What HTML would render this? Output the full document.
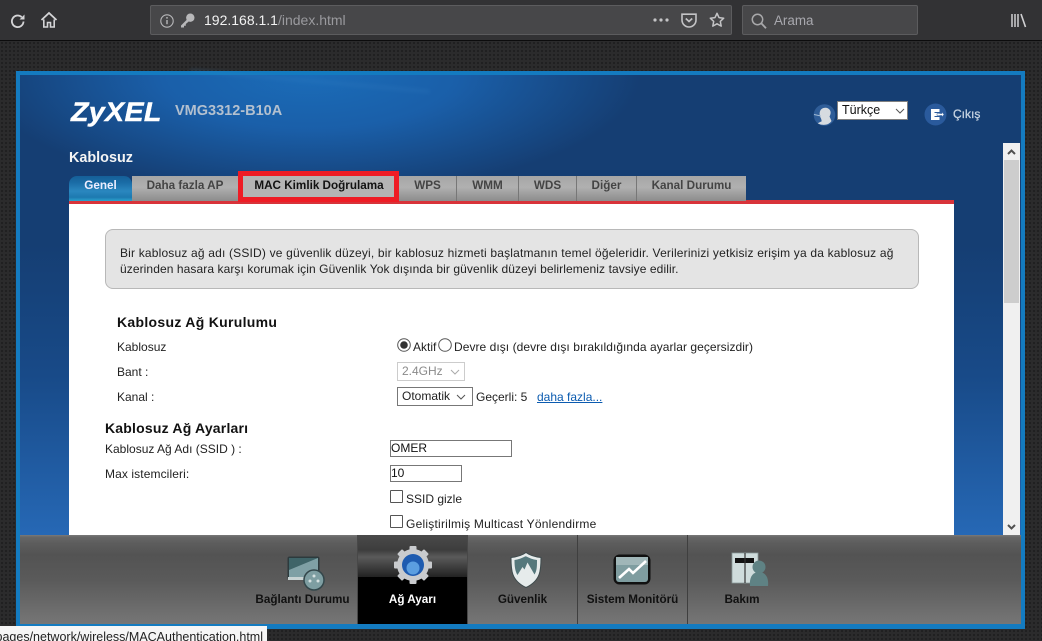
<!DOCTYPE html>
<html><head><meta charset="utf-8">
<style>
html,body{margin:0;padding:0}
body{width:1042px;height:641px;overflow:hidden;position:relative;background:#2a2a2b;font-family:"Liberation Sans",sans-serif;font-size:12px;color:#222}
.a{position:absolute;white-space:nowrap}
#tex{left:0;top:41px;width:1042px;height:600px;background-color:#2b2b2c;background-image:radial-gradient(#1f1f20 1px,transparent 1.2px);background-size:4px 4px}
#bar{left:0;top:0;width:1042px;height:40px;background:#323234;border-bottom:1px solid #0c0c0d}
.field{background:#474749;border:1px solid #5c5c5e;border-radius:2px;box-sizing:border-box}
#frame{left:16px;top:71px;width:1009px;height:558px;background:#147bc0}
#main{left:20px;top:75px;width:1001px;height:460px;background:linear-gradient(180deg,#153e73 0,#153e73 170px,#184a88 300px,#2668b5 460px)}
#glow{left:20px;top:75px;width:1001px;height:125px;background:radial-gradient(ellipse 330px 120px at 290px 0,#1b6cb8 0,#1a5fa9 45%,rgba(21,62,115,0) 100%)}
#streak{left:190px;top:80px;width:240px;height:2px;background:#3b84c6;opacity:.35;transform:rotate(5deg);filter:blur(2px)}
#white{left:69px;top:204px;width:885px;height:331px;background:#fff}
#red{left:69px;top:200px;width:885px;height:4px;background:#d8333a}
.tab{top:176px;height:25px;box-sizing:border-box;background:linear-gradient(180deg,#a6a6a6,#b0b0b0 45%,#8c8c8c);border-right:1px solid #777;text-align:center;font-weight:bold;font-size:11.7px;line-height:20px;color:#444}
#foot{left:20px;top:535px;width:1001px;height:89px;background:linear-gradient(180deg,#7a7a7a 0,#676767 2px,#5d5d5d 8px,#535353 20px,#5a5a5a 45px,#767676 89px)}
.ft{top:593px;font-weight:bold;font-size:11.7px;color:#111;text-align:center;line-height:14px}
.sep{top:535px;width:1px;height:89px;background:#3f3f3f}
.lab{font-size:12px;line-height:14px;color:#222}
.h{font-weight:bold;font-size:14px;letter-spacing:.2px;line-height:16px;color:#111}
.inp{box-sizing:border-box;border:1px solid #777;background:#fff;font-size:12px;line-height:15px;padding-left:0;color:#111}
.sel{box-sizing:border-box;border:1px solid #777;background:#fff;height:19px;font-size:12px;line-height:17px;padding-left:4px;color:#222}
.cb{box-sizing:border-box;width:13px;height:13px;border:1px solid #555;background:#fff;border-radius:1px}
svg{position:absolute;overflow:visible}
</style></head><body>
<div class="a" id="tex"></div>
<div class="a" id="bar"></div>
<svg style="left:9px;top:12px" width="18" height="18" viewBox="0 0 18 18" fill="none"><path d="M14.5 9.5a5.8 5.8 0 1 1-1.8-4.4" stroke="#d4d4d6" stroke-width="1.8"/><path d="M15.5 2.5v5h-5z" fill="#d4d4d6"/></svg>
<svg style="left:40px;top:11px" width="18" height="18" viewBox="0 0 18 18" fill="none"><path d="M1.5 9 9 2l7.500 7" stroke="#d4d4d6" stroke-width="1.800"/><path d="M3.800 8.500V16h3.700v-4.500h3V16h3.700V8.500" stroke="#d4d4d6" stroke-width="1.600"/></svg>
<div class="a field" style="left:150px;top:5px;width:582px;height:30px"></div>
<svg style="left:160px;top:14px" width="14" height="14" viewBox="0 0 14 14" fill="none"><circle cx="7" cy="7" r="6.200" stroke="#b8b8ba" stroke-width="1.100"/><path d="M7 6v4.200" stroke="#b8b8ba" stroke-width="1.400"/><circle cx="7" cy="3.900" r=".9" fill="#b8b8ba"/></svg>
<svg style="left:180px;top:13px" width="15" height="15" viewBox="0 0 15 15"><circle cx="10.300" cy="4.700" r="4.200" fill="#b8b8ba"/><path d="M7.500 6 1 12.500V14.500h3v-1.800h1.800V11l3.500-3z" fill="#b8b8ba"/></svg>
<div class="a" style="left:204px;top:12px;font-size:14px;line-height:17px;color:#f2f2f2">192.168.1.1<span style="color:#9a9a9e">/index.html</span></div>
<svg style="left:653px;top:18px" width="17" height="5"><circle cx="2" cy="2" r="1.600" fill="#c4c4c6"/><circle cx="8" cy="2" r="1.600" fill="#c4c4c6"/><circle cx="14" cy="2" r="1.600" fill="#c4c4c6"/></svg>
<svg style="left:681px;top:13px" width="16" height="15" viewBox="0 0 16 15" fill="none"><path d="M1 1.200h14v5.800a7 7 0 0 1-14 0z" stroke="#c4c4c6" stroke-width="1.600"/><path d="M4.800 5.500 8 8.500l3.200-3" stroke="#c4c4c6" stroke-width="1.700"/></svg>
<svg style="left:709px;top:12px" width="16" height="16" viewBox="0 0 16 16" fill="none"><path d="M8 1.300l2 4.300 4.700.6-3.400 3.200.9 4.700L8 11.800l-4.200 2.300.9-4.700L1.300 6.200 6 5.600z" stroke="#c4c4c6" stroke-width="1.500" stroke-linejoin="round"/></svg>
<div class="a field" style="left:742px;top:5px;width:176px;height:30px"></div>
<svg style="left:751px;top:13px" width="16" height="16" viewBox="0 0 16 16" fill="none"><circle cx="6.500" cy="6.500" r="5.200" stroke="#a8a8aa" stroke-width="1.500"/><path d="m10.500 10.500 4.500 4.800" stroke="#a8a8aa" stroke-width="1.800"/></svg>
<div class="a" style="left:774px;top:13px;font-size:13.400px;line-height:16px;color:#a8a8ae">Arama</div>
<svg style="left:1011px;top:13px" width="16" height="15" viewBox="0 0 16 15"><path d="M1 1v13M4 1v13M7 1v13" stroke="#d0d0d2" stroke-width="1.500"/><path d="M10 1l4.500 13" stroke="#d0d0d2" stroke-width="1.600"/></svg>

<div class="a" id="frame"></div>
<div class="a" id="main"></div>
<div class="a" id="glow"></div>
<div class="a" id="streak"></div>

<div class="a" style="left:71px;top:94px;font-size:27px;line-height:36px;font-weight:bold;font-style:italic;color:#fff;letter-spacing:.3px;transform:scaleX(1.060);transform-origin:left;-webkit-text-stroke:.4px #fff">ZyXEL</div>
<div class="a" style="left:175px;top:103px;font-size:14.500px;line-height:17px;font-weight:bold;color:#b3c0cf">VMG3312-B10A</div>
<div class="a" style="left:69px;top:150px;font-size:14.400px;line-height:16px;font-weight:bold;color:#f4f4f4">Kablosuz</div>

<svg style="left:813px;top:104px" width="23" height="22" viewBox="0 0 23 22"><circle cx="11.500" cy="11" r="10.800" fill="#2f5d98"/><path d="M8 5.500c3-3 8.500-2 9.500 2 .5 2-.5 4-1 5l2 4.500c-2 3-5 4-9 3.800-2-.1-3.500-.8-4.800-1.500l4-2c-.3-1.300-.3-2-.8-3-1.500-2.500-1.900-6.300.1-8.800z" fill="#d6dbe0"/><path d="M1 10.500 8 12" stroke="#a5bdd6" stroke-width="1"/></svg>
<div class="a" style="left:837px;top:101px;width:71px;height:19px;box-sizing:border-box;border:1px solid #808080;background:#fff;color:#111;font-size:12.500px;line-height:17px;padding-left:4px">Türkçe</div>
<svg style="left:895px;top:108px" width="10" height="6"><path d="M1 1l4 4 4-4" fill="none" stroke="#555" stroke-width="1"/></svg>
<svg style="left:924px;top:103px" width="23" height="23" viewBox="0 0 23 23"><circle cx="11.500" cy="11.500" r="11" fill="#2a5a9c"/><path d="M7 6h8.500v3H10.500v1h5v3h-5v1h5v3H7z" fill="#fff"/><path d="M13 10.500h5v-1.500l2 2.500-2 2.500v-1.500h-5z" fill="#fff" stroke="#2a5a9c" stroke-width=".5"/></svg>
<div class="a" style="left:953px;top:107px;font-size:12px;line-height:15px;color:#c5d2e0;-webkit-text-stroke:.3px #c5d2e0">Çıkış</div>

<div class="a" id="red"></div>
<div class="a tab" style="left:69px;width:63px;border:0;border-radius:8px 8px 0 0;color:#eef;background:linear-gradient(180deg,#155f98 0,#1a6ba5 25%,#2a87bf 60%,#1d79b0 85%,#2ba3cd 100%);height:25px">Genel</div>
<div class="a tab" style="left:132px;width:107px">Daha fazla AP</div>
<div class="a tab" style="left:239px;width:160px;height:25px;color:#111;background:#b4b4b4;border-right:0">MAC Kimlik Doğrulama</div>
<div class="a" style="left:238px;top:171px;width:161px;height:31px;box-sizing:border-box;border:5px solid #ee1c25"></div>
<div class="a tab" style="left:399px;width:58px">WPS</div>
<div class="a tab" style="left:457px;width:62px">WMM</div>
<div class="a tab" style="left:519px;width:58px">WDS</div>
<div class="a tab" style="left:577px;width:60px">Diğer</div>
<div class="a tab" style="left:637px;width:109px;border-right:0">Kanal Durumu</div>

<div class="a" id="white"></div>
<div class="a" style="left:105px;top:229px;width:814px;height:60px;box-sizing:border-box;background:#e4e4e4;border:1px solid #b8b8b8;border-radius:8px"></div>
<div class="a lab" style="left:120px;top:245px;line-height:16px;letter-spacing:.18px">Bir kablosuz ağ adı (SSID) ve güvenlik düzeyi, bir kablosuz hizmeti başlatmanın temel öğeleridir. Verilerinizi yetkisiz erişim ya da kablosuz ağ</div>
<div class="a lab" style="left:120px;top:261px;line-height:16px;letter-spacing:.085px">üzerinden hasara karşı korumak için Güvenlik Yok dışında bir güvenlik düzeyi belirlemeniz tavsiye edilir.</div>

<div class="a h" style="left:117px;top:314px;letter-spacing:.3px">Kablosuz Ağ Kurulumu</div>
<div class="a lab" style="left:117px;top:340px">Kablosuz</div>
<svg style="left:397px;top:338px" width="14" height="14"><circle cx="7" cy="7" r="6.300" fill="#fff" stroke="#555"/><circle cx="7" cy="7" r="3.800" fill="#333"/></svg>
<div class="a lab" style="left:413px;top:340px">Aktif</div>
<svg style="left:438px;top:338px" width="14" height="14"><circle cx="7" cy="7" r="6.300" fill="#fff" stroke="#555"/></svg>
<div class="a lab" style="left:454px;top:340px;letter-spacing:.05px">Devre dışı (devre dışı bırakıldığında ayarlar geçersizdir)</div>
<div class="a lab" style="left:117px;top:365px">Bant :</div>
<div class="a sel" style="left:397px;top:362px;width:68px;border-color:#ccc;color:#8a8a8a">2.4GHz</div>
<svg style="left:450px;top:369px" width="10" height="6"><path d="M1 1l4 4 4-4" fill="none" stroke="#aaa"/></svg>
<div class="a lab" style="left:117px;top:390px">Kanal :</div>
<div class="a sel" style="left:397px;top:387px;width:76px">Otomatik</div>
<svg style="left:456px;top:394px" width="10" height="6"><path d="M1 1l4 4 4-4" fill="none" stroke="#555"/></svg>
<div class="a lab" style="left:476px;top:390px">Geçerli: 5</div>
<div class="a lab" style="left:537px;top:390px;color:#0b5bb0;text-decoration:underline">daha fazla...</div>

<div class="a h" style="left:105px;top:420px">Kablosuz Ağ Ayarları</div>
<div class="a lab" style="left:105px;top:442px">Kablosuz Ağ Adı (SSID ) :</div>
<div class="a inp" style="left:390px;top:440px;width:122px;height:17px">OMER</div>
<div class="a lab" style="left:105px;top:467px;letter-spacing:.1px">Max istemcileri:</div>
<div class="a inp" style="left:390px;top:465px;width:72px;height:17px">10</div>
<div class="a cb" style="left:390px;top:490px"></div>
<div class="a lab" style="left:406px;top:492px">SSID gizle</div>
<div class="a cb" style="left:390px;top:515px"></div>
<div class="a lab" style="left:406px;top:517px;letter-spacing:.23px">Geliştirilmiş Multicast Yönlendirme</div>

<div class="a" style="left:1003px;top:143px;width:17px;height:392px;background:#f0f0f0"></div>
<div class="a" style="left:1004px;top:160px;width:15px;height:143px;background:#cdcdcd"></div>
<svg style="left:1007px;top:149px" width="9" height="6"><path d="M1 5l3.500-3.500L8 5" fill="none" stroke="#505050" stroke-width="2"/></svg>
<svg style="left:1007px;top:524px" width="9" height="6"><path d="M1 1l3.500 3.500L8 1" fill="none" stroke="#505050" stroke-width="2"/></svg>

<div class="a" id="foot"></div>
<div class="a" style="left:358px;top:535px;width:109px;height:89px;background:linear-gradient(180deg,#4a4a4a 0,#3d3d3d 15px,#5a5a5a 22px,#222 42px,#000 42px,#000 100%)"></div>
<div class="a sep" style="left:357px;background:#484848"></div>
<div class="a sep" style="left:467px;background:#484848"></div>
<div class="a sep" style="left:577px"></div>
<div class="a sep" style="left:687px"></div>

<svg style="left:287px;top:556px" width="40" height="36" viewBox="0 0 40 36"><rect x=".5" y=".5" width="32" height="23" rx="2" fill="#2d3a3d"/><rect x="2" y="2" width="29" height="19" fill="#7fa0a5"/><path d="M2 2h29L2 14z" fill="#3f6468"/><rect x="1" y="21" width="31" height="3" fill="#c8d3d3"/><circle cx="27" cy="24" r="10" fill="#7e9ea2" stroke="#33474b" stroke-width="1.500"/><circle cx="27" cy="20" r="1.500" fill="#d5e0e0"/><circle cx="23" cy="25" r="1.500" fill="#d5e0e0"/><circle cx="31" cy="25" r="1.500" fill="#d5e0e0"/></svg>
<svg style="left:394px;top:546px" width="38" height="38" viewBox="0 0 38 38"><g fill="#c9cbce"><circle cx="19" cy="19" r="16"/><rect x="15.500" y="0" width="7" height="38" rx="1"/><rect x="0" y="15.500" width="38" height="7" rx="1"/><rect x="15.500" y="0" width="7" height="38" rx="1" transform="rotate(45 19 19)"/><rect x="15.500" y="0" width="7" height="38" rx="1" transform="rotate(-45 19 19)"/></g><circle cx="19" cy="19" r="11" fill="#1e5bb0"/><circle cx="19" cy="22" r="6.500" fill="#5b9ee0"/></svg>
<svg style="left:510px;top:552px" width="32" height="36" viewBox="0 0 32 36"><path d="M16 .5C12 3.500 6 5 1 5.500c0 12 0 23 15 30 15-7 15-18 15-30C26 5 20 3.500 16 .5z" fill="#e6ebeb" stroke="#3d4a4c"/><path d="M16 4C12.500 6 8 7.500 4.500 8c0 6 .5 11 3 15l5-8 2 2.500 3-7 7 12c2.500-4 2.500-8 2.500-14.500-4-.5-8-2-11.500-4z" fill="#55787c"/></svg>
<svg style="left:613px;top:554px" width="38" height="31" viewBox="0 0 38 31"><rect x=".5" y=".5" width="37" height="30" rx="6" fill="#111"/><rect x="3" y="3" width="32" height="25" rx="3" fill="#7f9da0"/><path d="M3 3h32v8H3z" fill="#a0b6b8"/><path d="M6 24l10-9 4 4 13-12" fill="none" stroke="#fff" stroke-width="2.600"/></svg>
<svg style="left:731px;top:552px" width="38" height="36" viewBox="0 0 38 36"><rect x="1" y="1" width="26" height="30" fill="#cfdcdc" stroke="#8a9a9a" stroke-width=".8"/><rect x="4" y="6" width="19" height="5" fill="#111"/><path d="M14 1v30" stroke="#333" stroke-width="1.200"/><circle cx="28" cy="15" r="6.500" fill="#5f8284"/><path d="M19 34c-1-9 3-14 9-14s10 5 9 14z" fill="#5f8284"/></svg>

<div class="a ft" style="left:255px;width:95px">Bağlantı Durumu</div>
<div class="a ft" style="left:358px;width:109px;color:#fff">Ağ Ayarı</div>
<div class="a ft" style="left:468px;width:109px">Güvenlik</div>
<div class="a ft" style="left:578px;width:109px">Sistem Monitörü</div>
<div class="a ft" style="left:688px;width:108px">Bakım</div>

<div class="a" style="left:0;top:626px;width:267px;height:15px;background:#f6f6f6;overflow:hidden"><div class="a" style="right:4px;top:4px;font-size:12.500px;line-height:15px;color:#222">pages/network/wireless/MACAuthentication.html</div></div>
</body></html>
